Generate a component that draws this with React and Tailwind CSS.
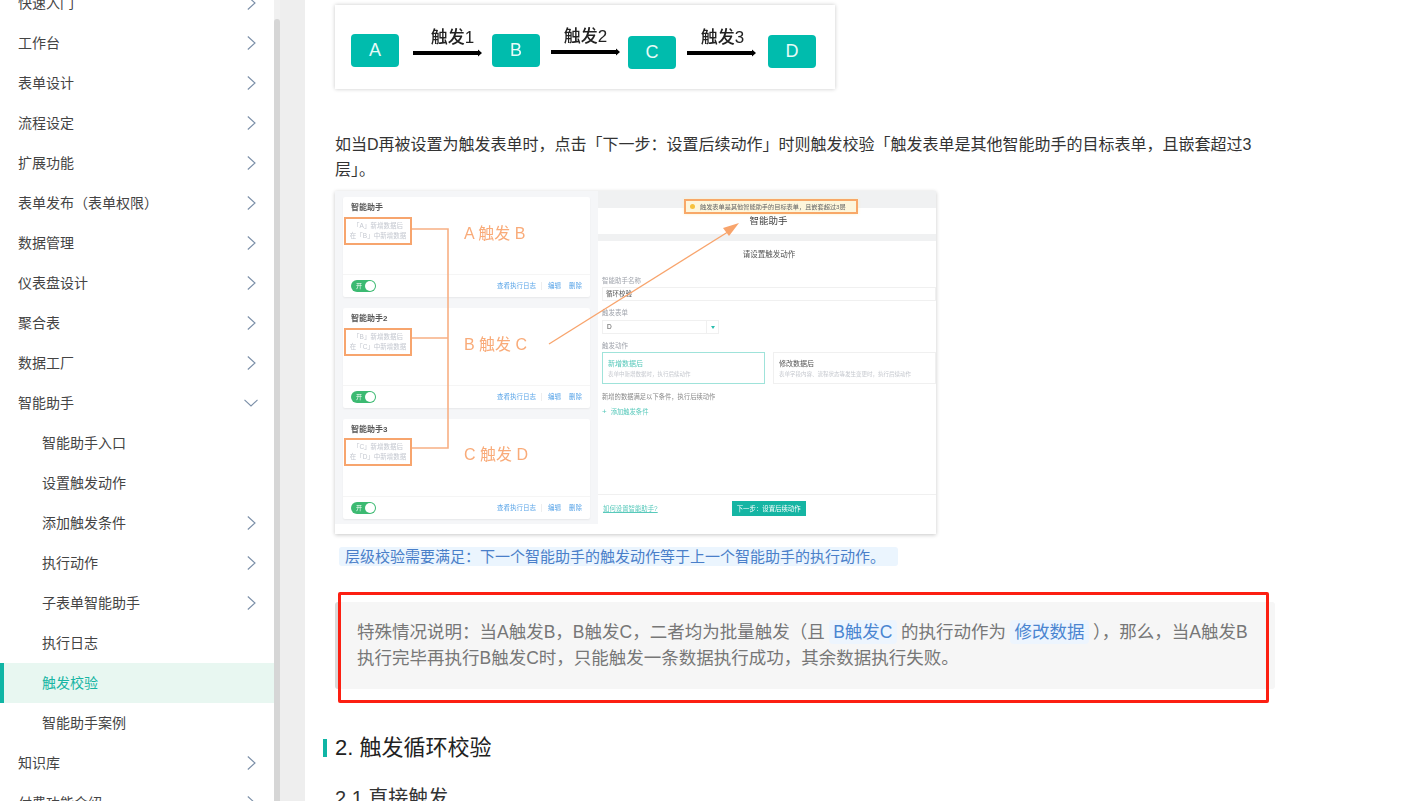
const FONT = "font-['Liberation_Sans','Noto_Sans_CJK_SC',sans-serif]";

const NAV = [
  { t: "快速入门", c: "r" },
  { t: "工作台", c: "r" },
  { t: "表单设计", c: "r" },
  { t: "流程设定", c: "r" },
  { t: "扩展功能", c: "r" },
  { t: "表单发布（表单权限）", c: "r" },
  { t: "数据管理", c: "r" },
  { t: "仪表盘设计", c: "r" },
  { t: "聚合表", c: "r" },
  { t: "数据工厂", c: "r" },
  { t: "智能助手", c: "d" },
  { t: "智能助手入口", sub: true },
  { t: "设置触发动作", sub: true },
  { t: "添加触发条件", sub: true, c: "r" },
  { t: "执行动作", sub: true, c: "r" },
  { t: "子表单智能助手", sub: true, c: "r" },
  { t: "执行日志", sub: true },
  { t: "触发校验", sub: true, active: true },
  { t: "智能助手案例", sub: true },
  { t: "知识库", c: "r" },
  { t: "付费功能介绍", c: "r" },
];

function Chevron({ dir }) {
  return dir === "d" ? (
    <svg width="14" height="8" viewBox="0 0 14 8" fill="none" stroke="#7b8fa8" strokeWidth="1.1" className="absolute left-[244px] top-[16px]">
      <path d="M0.5 0.8 L7 7 L13.5 0.8" />
    </svg>
  ) : (
    <svg width="9" height="14" viewBox="0 0 9 14" fill="none" stroke="#7b8fa8" strokeWidth="1.1" className="absolute left-[247px] top-[13px]">
      <path d="M0.8 0.5 L8 7 L0.8 13.5" />
    </svg>
  );
}

function Sidebar() {
  return (
    <nav className="w-[274px] h-full shrink-0 overflow-hidden bg-white">
      <ul className="-mt-[17px]">
        {NAV.map((n) => (
          <li
            key={n.t}
            className={
              n.active
                ? "relative h-10 flex items-center pl-[38px] text-sm text-[#17b5a3] bg-[#e8f7f1] border-l-4 border-[#10b5a5]"
                : n.sub
                ? "relative h-10 flex items-center pl-[42px] text-sm text-[#444]"
                : "relative h-10 flex items-center pl-[18px] text-sm text-[#444]"
            }
          >
            {n.t}
            {n.c && <Chevron dir={n.c} />}
          </li>
        ))}
      </ul>
    </nav>
  );
}

function Box({ label, mt, ml }) {
  return (
    <div className={`w-12 h-[33px] rounded-[4px] bg-[#00bcad] text-[#e8fbf8] text-[18px] flex items-center justify-center shrink-0 ${mt} ${ml}`}>
      {label}
    </div>
  );
}

function Arrow({ label, mt, ml, shift }) {
  return (
    <div className={`flex flex-col items-center w-[69px] shrink-0 ${mt} ${ml}`}>
      <span className={`text-[17px] leading-[20px] font-medium text-[#222] whitespace-nowrap ${shift}`}>{label}</span>
      <svg width="69" height="8" viewBox="0 0 69 8" className="mt-px">
        <path d="M0 2 H65 V0.5 L69 4 L65 7.5 V6 H0 Z" fill="#000" />
      </svg>
    </div>
  );
}

function ChainImage() {
  return (
    <div className="w-[500px] h-[84px] bg-white shadow-[0_0_4px_rgba(0,0,0,0.22)] flex items-start pl-4 blur-[0.3px]">
      <Box label="A" mt="mt-[29px]" ml="" />
      <Arrow label="触发1" mt="mt-[23px]" ml="ml-[14px]" shift="translate-x-[5px]" />
      <Box label="B" mt="mt-[29px]" ml="ml-[10px]" />
      <Arrow label="触发2" mt="mt-[22px]" ml="ml-[11px]" shift="" />
      <Box label="C" mt="mt-[31px]" ml="ml-2" />
      <Arrow label="触发3" mt="mt-[23px]" ml="ml-[11px]" shift="translate-x-px" />
      <Box label="D" mt="mt-[30px]" ml="ml-3" />
    </div>
  );
}

function Rule({ title, a, b, action, boxMt, labelMt }) {
  return (
    <div className="w-[247px] h-[100px] bg-white rounded-[2px] shadow-[0_1px_2px_rgba(0,0,0,0.06)] flex flex-col">
      <div className="pl-2 pt-[5px] text-[8px] leading-[11px] font-bold text-[#555]">{title}</div>
      <div className={`flex items-center ${boxMt}`}>
        <div className="ml-px w-[68px] h-[28px] border-2 border-[#f7a56e] text-[6.5px] leading-[10px] text-[#c4c8d0] flex flex-col justify-center items-center whitespace-nowrap">
          <span>「{a}」新增数据后</span>
          <span>在「{b}」中新增数据</span>
        </div>
        <span className={`ml-[52px] text-[16px] text-[#f9ab79] whitespace-nowrap ${labelMt}`}>{action}</span>
      </div>
      <div className="mt-auto h-[23px] border-t border-[#f5f5f5] flex items-center px-2">
        <div className="w-[25px] h-[12px] rounded-full bg-[#3cba72] flex items-center justify-between pl-[5px] pr-px text-[6px] text-white">
          开<span className="w-[10px] h-[10px] rounded-full bg-white" />
        </div>
        <div className="ml-auto flex items-center text-[6.5px] text-[#5aa5e8] whitespace-nowrap">
          <span>查看执行日志</span>
          <span className="ml-[5px] h-2 w-px bg-[#eee]" />
          <span className="ml-[6px]">编辑</span>
          <span className="ml-2">删除</span>
        </div>
      </div>
    </div>
  );
}

function AssistantImage() {
  return (
    <div className="relative w-[601px] h-[343px] bg-white shadow-[0_1px_4px_rgba(0,0,0,0.22)]">
      <div className="flex h-full blur-[0.5px]">
        <div className="w-[263px] h-[333px] shrink-0 bg-[#f5f6f8] pl-2 pt-[6px] flex flex-col gap-[11px]">
          <Rule title="智能助手" a="A" b="B" action="A 触发 B" boxMt="mt-[2px]" labelMt="mt-[7px]" />
          <Rule title="智能助手2" a="B" b="C" action="B 触发 C" boxMt="mt-[3px]" labelMt="mt-[6px]" />
          <Rule title="智能助手3" a="C" b="D" action="C 触发 D" boxMt="mt-[1px]" labelMt="mt-[7px]" />
        </div>
        <div className="flex-1 flex flex-col min-w-0">
          <div className="h-[17px] bg-[#f0f1f2]" />
          <div className="h-[26px] flex items-center justify-center text-[9.5px] text-[#444] pt-px pl-[3px]">智能助手</div>
          <div className="h-[7px] bg-[#f0f1f2]" />
          <div className="flex-1 flex flex-col pl-1">
            <div className="mt-[8px] text-center text-[7.5px] leading-[12px] text-[#555]">请设置触发动作</div>
            <div className="mt-[15px] text-[6.5px] leading-[9px] text-[#a0a4ac]">智能助手名称</div>
            <div className="mt-[2px] h-[14px] border border-[#f0f0f0] text-[6.5px] text-[#555] flex items-center pl-[3px]">循环校验</div>
            <div className="mt-[7px] text-[6.5px] leading-[9px] text-[#a0a4ac]">触发表单</div>
            <div className="mt-[3px] w-[117px] h-[14px] border border-[#f0f0f0] text-[6.5px] text-[#555] flex items-center pl-1">
              D
              <span className="ml-auto w-[12px] h-full border-l border-[#f0f0f0] flex items-center justify-center">
                <svg width="4" height="3" viewBox="0 0 4 3"><path d="M0 0 H4 L2 3 Z" fill="#2bbdae" /></svg>
              </span>
            </div>
            <div className="mt-[7px] text-[6.5px] leading-[9px] text-[#a0a4ac]">触发动作</div>
            <div className="mt-[2px] flex gap-2">
              <div className="w-[163px] h-[32px] border border-[#9fe3da] pl-[5px] flex flex-col justify-center gap-[2px]">
                <span className="text-[7px] leading-[9px] text-[#58c9bb]">新增数据后</span>
                <span className="text-[5.5px] leading-[8px] text-[#c5c8ce]">表单中新增数据时，执行后续动作</span>
              </div>
              <div className="flex-1 h-[32px] border border-[#f0f0f0] pl-[5px] flex flex-col justify-center gap-[2px] whitespace-nowrap">
                <span className="text-[7px] leading-[9px] text-[#555]">修改数据后</span>
                <span className="text-[5.5px] leading-[8px] text-[#c5c8ce]">表单字段内容、流程状态等发生变更时，执行后续动作</span>
              </div>
            </div>
            <div className="mt-[8px] text-[6.3px] leading-[9px] text-[#888]">新增的数据满足以下条件，执行后续动作</div>
            <div className="mt-[6px] text-[6.3px] leading-[9px] text-[#58c9bb] flex items-center gap-1">
              <span className="text-[8px] leading-[9px]">+</span>添加触发条件
            </div>
            <div className="mt-auto -ml-1 h-[40px] border-t border-[#f0f0f0] flex items-start pt-[6px] pl-[5px]">
              <span className="text-[6.4px] leading-[15px] text-[#58c9bb] underline whitespace-nowrap">如何设置智能助手?</span>
              <span className="ml-[74px] w-[74px] h-[15px] bg-[#15b5a3] text-white text-[6.4px] flex items-center justify-center whitespace-nowrap">
                下一步：设置后续动作
              </span>
            </div>
          </div>
        </div>
      </div>
      <div className="absolute left-[349px] top-[8px] w-[174px] h-[15px] border-2 border-[#f8a868] bg-[#fdf6dc] shadow-[0_0_3px_rgba(253,240,200,0.9)] flex items-center pl-[4px] gap-[5px] text-[6.2px] text-[#666] whitespace-nowrap blur-[0.3px]">
        <span className="w-[5px] h-[5px] rounded-full bg-[#f6c23d]" />
        触发表单是其他智能助手的目标表单，且嵌套超过3层
      </div>
      <svg className="absolute inset-0" width="601" height="343" viewBox="0 0 601 343" fill="none">
        <path d="M77 38 H113 V257 H77 M77 147 H113" stroke="#f8b084" strokeWidth="1.6" />
        <path d="M214 153 L396 39" stroke="#f8a46c" strokeWidth="1.3" />
        <path d="M404 32 L388 37 L394 45 Z" fill="#f8a46c" />
      </svg>
    </div>
  );
}

function Pill({ children }) {
  return (
    <span className="mx-1 px-[4.5px] py-[2px] rounded-[4px] bg-[#edf5fe] text-[#4a85d1]">{children}</span>
  );
}

export default function App() {
  return (
    <div className={`w-[1417px] h-[801px] flex overflow-hidden bg-white text-[#333] ${FONT}`}>
      <Sidebar />
      <div className="w-[6px] h-full shrink-0 bg-[#f1f1f1] flex flex-col pt-[19px]">
        <div className="flex-1 bg-[#d6d6d6] rounded-t-[3px]" />
      </div>
      <div className="w-[25px] h-full shrink-0 bg-[#eeeeee]" />
      <main className="flex-1 min-w-0 pl-[30px] pt-[5px] overflow-hidden">
        <div className="w-[940px]">
          <ChainImage />
          <p className="mt-[42.5px] text-base leading-[25px] text-[#333]">
            如当D再被设置为触发表单时，点击「下一步：设置后续动作」时则触发校验「触发表单是其他智能助手的目标表单，且嵌套超过3层」。
          </p>
          <div className="mt-[9.5px]">
            <AssistantImage />
          </div>
          <p className="mt-[9.5px] ml-1 text-[15px] leading-[25px]">
            <span className="pl-[6px] pr-[13px] py-[1px] rounded-[3px] bg-[#ebf5fe] text-[#4a7fc9]">
              层级校验需要满足：下一个智能助手的触发动作等于上一个智能助手的执行动作。
            </span>
          </p>
          <div className="relative mt-[33.5px]">
            <blockquote className="h-[87px] rounded-[3px] bg-[#f6f6f6] border-l-4 border-[#d9d9d9] pl-[18px] pr-6 pt-[17px] text-[17.5px] leading-[26px] text-[#777]">
              特殊情况说明：当A触发B，B触发C，二者均为批量触发（且<Pill>B触发C</Pill>的执行动作为<Pill>修改数据</Pill>），那么，当A触发B执行完毕再执行B触发C时，只能触发一条数据执行成功，其余数据执行失败。
            </blockquote>
            <div className="absolute left-[3px] -top-[10px] w-[931px] h-[111px] border-[3px] border-[#fc1f12] rounded-[2px]" />
          </div>
          <h2 className="relative mt-[44px] text-[22px] leading-[30px] text-[#222] font-normal">
            <span className="absolute -left-3 top-[6px] w-1 h-[18px] bg-[#10b5a5]" />
            2. 触发循环校验
          </h2>
          <h3 className="mt-[21px] text-[20px] leading-[28px] text-[#333] font-normal">2.1 直接触发</h3>
        </div>
      </main>
    </div>
  );
}
